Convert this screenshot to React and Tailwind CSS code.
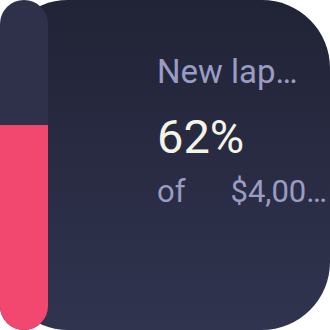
export default function App() {
  const percent = 62;

  return (
    <div className="w-[330px] h-[330px] bg-white" style={{ fontFamily: 'Roboto, "Liberation Sans", sans-serif' }}>
      <div className="w-full h-full rounded-[68px] bg-gradient-to-b from-[#212336] to-[#30344f] flex">
        {/* Progress bar */}
        <div className="w-12 h-full rounded-full bg-[#2e3149] flex flex-col justify-end overflow-hidden shrink-0">
          <div className="w-full bg-[#f2476f]" style={{ height: `${percent}%` }}></div>
        </div>

        {/* Goal text */}
        <div className="pl-[109px] flex flex-col">
          <div className="mt-[55px] text-[33px] leading-none text-[#9a9cc4] whitespace-nowrap">New lap…</div>
          <div className="mt-[25px] text-[47px] leading-none text-[#f4f4e6]">{percent}%</div>
          <div className="mt-[16px] flex gap-[45px] text-[31px] leading-none text-[#9a9cc4] whitespace-nowrap">
            <span>of</span>
            <span>$4,00…</span>
          </div>
        </div>
      </div>
    </div>
  );
}
